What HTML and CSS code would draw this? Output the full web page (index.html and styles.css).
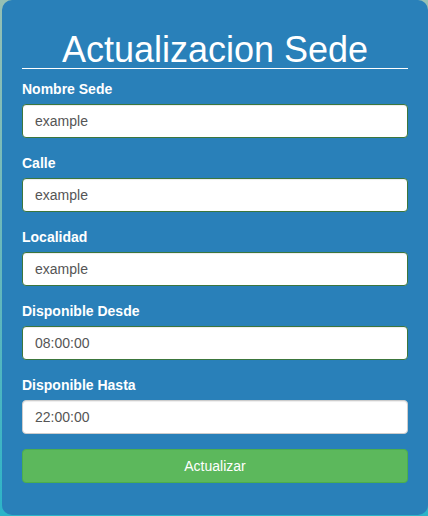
FILE: index.html
```html
<!DOCTYPE html>
<html lang="es">
<head>
<meta charset="utf-8">
<title>Actualizacion Sede</title>
<link rel="stylesheet" href="styles.css">
</head>
<body>
<div class="page">
  <form class="card">
    <h1 class="title">Actualizacion Sede</h1>
    <div class="group">
      <label class="label">Nombre Sede</label>
      <input class="field ok" type="text" value="example">
    </div>
    <div class="group">
      <label class="label">Calle</label>
      <input class="field ok" type="text" value="example">
    </div>
    <div class="group">
      <label class="label">Localidad</label>
      <input class="field ok" type="text" value="example">
    </div>
    <div class="group">
      <label class="label">Disponible Desde</label>
      <input class="field ok" type="text" value="08:00:00">
    </div>
    <div class="group">
      <label class="label">Disponible Hasta</label>
      <input class="field" type="text" value="22:00:00">
    </div>
    <button class="btn" type="button">Actualizar</button>
  </form>
</div>
</body>
</html>
```
FILE: styles.css
```css
* { box-sizing: border-box; }
html, body { margin: 0; height: 100%; }
body {
  background: linear-gradient(to bottom, #95c0b4 0%, #5fb7bd 60%, #2cb4c8 100%);
  font-family: "Liberation Sans", Arial, sans-serif;
  overflow: hidden;
}
.page {
  padding-left: 2px;
}
.card {
  width: 426px;
  background: #2980b9;
  border-radius: 10px;
  padding: 32px 20px 32px;
  display: flex;
  flex-direction: column;
}
.title {
  margin: 0 0 10px;
  font-size: 36px;
  line-height: 36px;
  font-weight: normal;
  color: #fff;
  text-align: center;
  border-bottom: 1px solid #fff;
}
.group {
  display: flex;
  flex-direction: column;
  margin-bottom: 15px;
}
.label {
  color: #fff;
  font-weight: bold;
  font-size: 14px;
  line-height: 20px;
  margin-bottom: 5px;
}
.field {
  height: 34px;
  padding: 6px 12px;
  font-family: "Liberation Sans", Arial, sans-serif;
  font-size: 14px;
  color: #555;
  background: #fff;
  border: 1px solid #ccc;
  border-radius: 4px;
  box-shadow: inset 0 1px 1px rgba(0,0,0,.075);
  outline: none;
}
.field.ok {
  border-color: #3c763d;
}
.btn {
  height: 34px;
  background: #5cb85c;
  border: 1px solid #4cae4c;
  border-radius: 4px;
  color: #fff;
  font-family: "Liberation Sans", Arial, sans-serif;
  font-size: 14px;
  padding: 6px 12px;
}
```
